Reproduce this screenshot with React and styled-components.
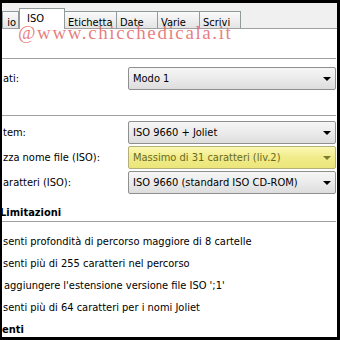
import React from 'react';
import styled, { createGlobalStyle } from 'styled-components';

const Global = createGlobalStyle`
  html, body {
    margin: 0;
    padding: 0;
    background: #000;
  }
`;

const Frame = styled.div`
  position: relative;
  box-sizing: border-box;
  width: 340px;
  height: 340px;
  border-style: solid;
  border-color: #000;
  border-width: 3px 3px 3px 2px;
  background: #fff;
  overflow: hidden;
  display: flex;
  flex-direction: column;
  font-family: 'DejaVu Sans Condensed', 'DejaVu Sans', sans-serif;
  font-size: 11px;
  color: #000;
`;

const TabBar = styled.div`
  display: flex;
  align-items: flex-end;
  height: 25px;
  flex: none;
  background: #f0f0f0;
  border-bottom: 1px solid #a0a0a0;
`;

const Tab = styled.div`
  box-sizing: border-box;
  flex: none;
  width: ${(p) => p.$w}px;
  height: ${(p) => (p.$active ? 21 : 17)}px;
  margin-bottom: ${(p) => (p.$active ? -1 : 0)}px;
  margin-left: ${(p) => p.$ml || 0}px;
  padding: ${(p) => (p.$active ? '3px 0 0 7px' : '4px 0 0 3px')};
  border: 1px solid #919b9c;
  border-bottom: none;
  background: ${(p) =>
    p.$active ? '#fff' : 'linear-gradient(#fafafa, #e4e4e4)'};
  white-space: nowrap;
  overflow: hidden;
  text-align: ${(p) => (p.$right ? 'right' : 'left')};
  ${(p) => (p.$right ? 'padding: 4px 2px 0 0;' : '')}
`;

const Watermark = styled.div`
  position: absolute;
  left: 16px;
  top: 19px;
  font-family: 'Liberation Serif', serif;
  font-size: 19px;
  letter-spacing: 1.6px;
  color: rgba(226, 88, 88, 0.78);
  white-space: nowrap;
  pointer-events: none;
`;

const Content = styled.div`
  display: flex;
  flex-direction: column;
  flex: 1;
`;

const Divider = styled.div`
  height: 1px;
  flex: none;
  background: #a0a0a0;
  margin-top: ${(p) => p.$top}px;
  margin-right: 1px;
`;

const FieldRow = styled.div`
  display: flex;
  align-items: center;
  height: 23px;
  margin-top: ${(p) => p.$top}px;
`;

const Label = styled.span`
  width: 125px;
  padding-left: 1px;
  white-space: nowrap;
`;

const Select = styled.div`
  box-sizing: border-box;
  display: flex;
  align-items: center;
  justify-content: space-between;
  width: 208px;
  height: 100%;
  padding: 0 4px 0 4px;
  border: 1px solid ${(p) => (p.$highlight ? '#b5b07a' : '#8e8f8f')};
  border-radius: 2px;
  background: ${(p) =>
    p.$highlight
      ? 'linear-gradient(#faf8b4, #f1ec8a 50%, #ebe57a)'
      : 'linear-gradient(#f6f6f6, #ebebeb 50%, #dddddd)'};
  color: ${(p) => (p.$highlight ? '#6a6a1c' : '#000')};
`;

const Arrow = styled.span`
  width: 0;
  height: 0;
  border-left: 4px solid transparent;
  border-right: 4px solid transparent;
  border-top: 4px solid ${(p) => (p.$highlight ? '#7a7a30' : '#000')};
`;

const Heading = styled.div`
  font-weight: bold;
  height: 16px;
  line-height: 16px;
  margin-top: ${(p) => p.$top}px;
  margin-left: ${(p) => p.$left || 0}px;
  white-space: nowrap;
`;

const OptionList = styled.div`
  display: flex;
  flex-direction: column;
  margin-top: 9px;
`;

const Option = styled.div`
  height: 22px;
  line-height: 22px;
  padding-left: ${(p) => p.$indent || 1}px;
  white-space: nowrap;
`;

const Footer = styled.div`
  font-weight: bold;
  height: 22px;
  line-height: 22px;
  white-space: nowrap;
`;

const tabs = [
  { label: 'io', w: 17, right: true },
  { label: 'ISO', w: 46, active: true },
  { label: 'Etichetta', w: 53, ml: -1 },
  { label: 'Date', w: 42, ml: -1 },
  { label: 'Varie', w: 43, ml: -1 },
  { label: 'Scrivi', w: 42, ml: -1 },
];

const fields = [
  { label: 'tem:', value: 'ISO 9660 + Joliet', top: 5 },
  { label: 'zza nome file (ISO):', value: 'Massimo di 31 caratteri (liv.2)', top: 2, highlight: true },
  { label: 'aratteri (ISO):', value: 'ISO 9660 (standard ISO CD-ROM)', top: 2 },
];

const options = [
  'senti profondità di percorso maggiore di 8 cartelle',
  'senti più di 255 caratteri nel percorso',
  " aggiungere l'estensione versione file ISO ';1'",
  'senti più di 64 caratteri per i nomi Joliet',
];

export default function App() {
  return (
    <>
      <Global />
      <Frame>
        <TabBar>
          {tabs.map((t) => (
            <Tab key={t.label} $w={t.w} $active={t.active} $ml={t.ml} $right={t.right}>
              {t.label}
            </Tab>
          ))}
        </TabBar>
        <Content>
          <Divider $top={29} />
          <FieldRow $top={8}>
            <Label>ati:</Label>
            <Select>
              Modo 1
              <Arrow />
            </Select>
          </FieldRow>
          <Divider $top={25} />
          {fields.map((f) => (
            <FieldRow key={f.label} $top={f.top}>
              <Label>{f.label}</Label>
              <Select $highlight={f.highlight}>
                {f.value}
                <Arrow $highlight={f.highlight} />
              </Select>
            </FieldRow>
          ))}
          <Heading $top={11} $left={-2}>Limitazioni</Heading>
          <Divider $top={0} />
          <OptionList>
            {options.map((o, i) => (
              <Option key={i} $indent={i === 2 ? 2 : 1}>{o}</Option>
            ))}
          </OptionList>
          <Footer>enti</Footer>
        </Content>
        <Watermark>@www.chicchedicala.it</Watermark>
      </Frame>
    </>
  );
}
